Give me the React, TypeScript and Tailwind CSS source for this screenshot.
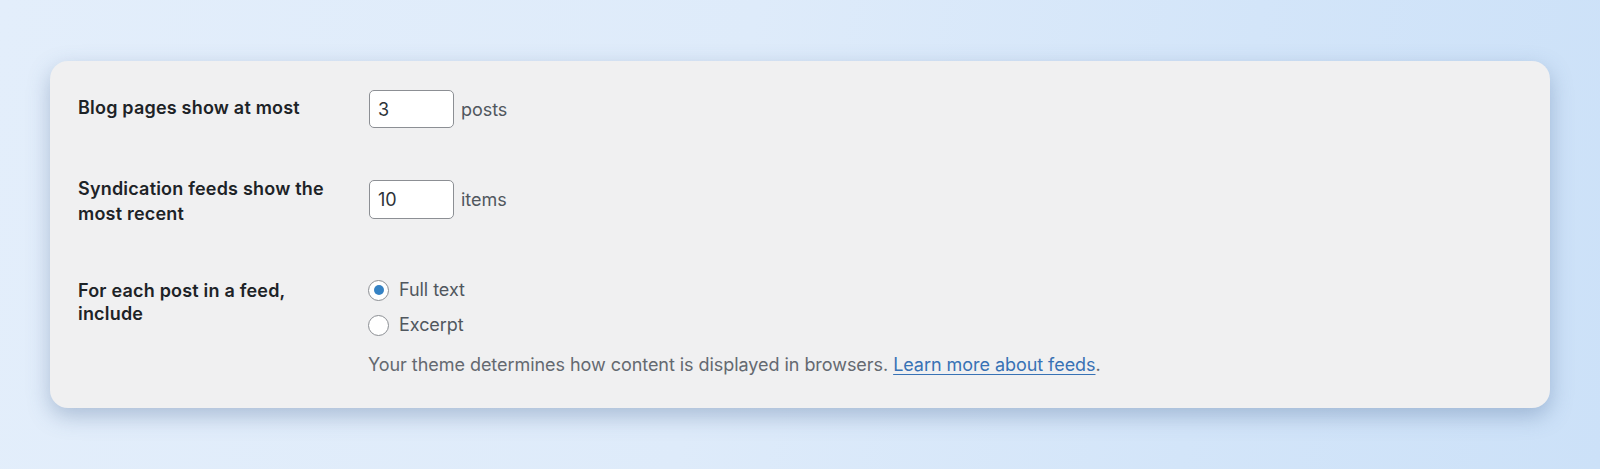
import React from "react";

const font = { fontFamily: "Inter, 'Noto Sans', 'Liberation Sans', sans-serif" };

function Radio({ checked }: { checked?: boolean }) {
  return (
    <span className="flex h-[21px] w-[21px] shrink-0 items-center justify-center rounded-full border border-[#8c8f94] bg-white">
      {checked && <span className="h-[10px] w-[10px] rounded-full bg-[#3582c4]" />}
    </span>
  );
}

export default function App() {
  return (
    <div
      className="h-[469px] w-[1600px] overflow-hidden bg-[linear-gradient(100deg,#e3eefb_0%,#deebfa_45%,#d3e5f9_75%,#cce1f8_100%)] pt-[61px] pl-[50px]"
      style={font}
    >
      <div className="w-[1500px] rounded-[18px] bg-[#f0f0f1] pt-[29px] pb-[31px] pl-[28px] text-[18px] tracking-[-0.05px] shadow-[0_8px_22px_rgba(70,100,145,0.35)]">
        {/* Row 1 */}
        <div className="flex items-start">
          <div className="mt-[6px] w-[291px] shrink-0 text-[18px] leading-[24px] font-semibold tracking-[0.2px] text-[#1d2327]">
            Blog pages show at most
          </div>
          <div className="flex items-center gap-[7px]">
            <div className="flex h-[38px] w-[85px] items-center rounded-[5px] border border-[#8c8f94] bg-white px-[8px] text-[#2c3338]">
              3
            </div>
            <span className="text-[#50575e]">posts</span>
          </div>
        </div>

        {/* Row 2 */}
        <div className="mt-[48px] flex items-start">
          <div className="w-[291px] shrink-0 text-[18px] leading-[25px] font-semibold tracking-[0.2px] text-[#1d2327]">
            Syndication feeds show the
            <br />
            most recent
          </div>
          <div className="mt-[4px] flex items-center gap-[7px]">
            <div className="flex h-[39px] w-[85px] items-center rounded-[5px] border border-[#8c8f94] bg-white px-[8px] text-[#2c3338]">
              10
            </div>
            <span className="text-[#50575e]">items</span>
          </div>
        </div>

        {/* Row 3 */}
        <div className="mt-[53px] flex items-start">
          <div className="w-[290px] shrink-0 text-[18px] leading-[23px] font-semibold tracking-[0.2px] text-[#1d2327]">
            For each post in a feed,
            <br />
            include
          </div>
          <div className="flex flex-col">
            <div className="-mt-[1px] flex h-[24px] items-center gap-[10px] text-[#50575e]">
              <Radio checked />
              <span className="leading-[24px]">Full text</span>
            </div>
            <div className="mt-[11px] flex h-[24px] items-center gap-[10px] text-[#50575e]">
              <Radio />
              <span className="leading-[24px]">Excerpt</span>
            </div>
            <p className="mt-[16px] leading-[24px] text-[#646970]">
              Your theme determines how content is displayed in browsers.{" "}
              <a href="#" className="text-[#3872b5] underline underline-offset-[3px]">
                Learn more about feeds
              </a>
              .
            </p>
          </div>
        </div>
      </div>
    </div>
  );
}
